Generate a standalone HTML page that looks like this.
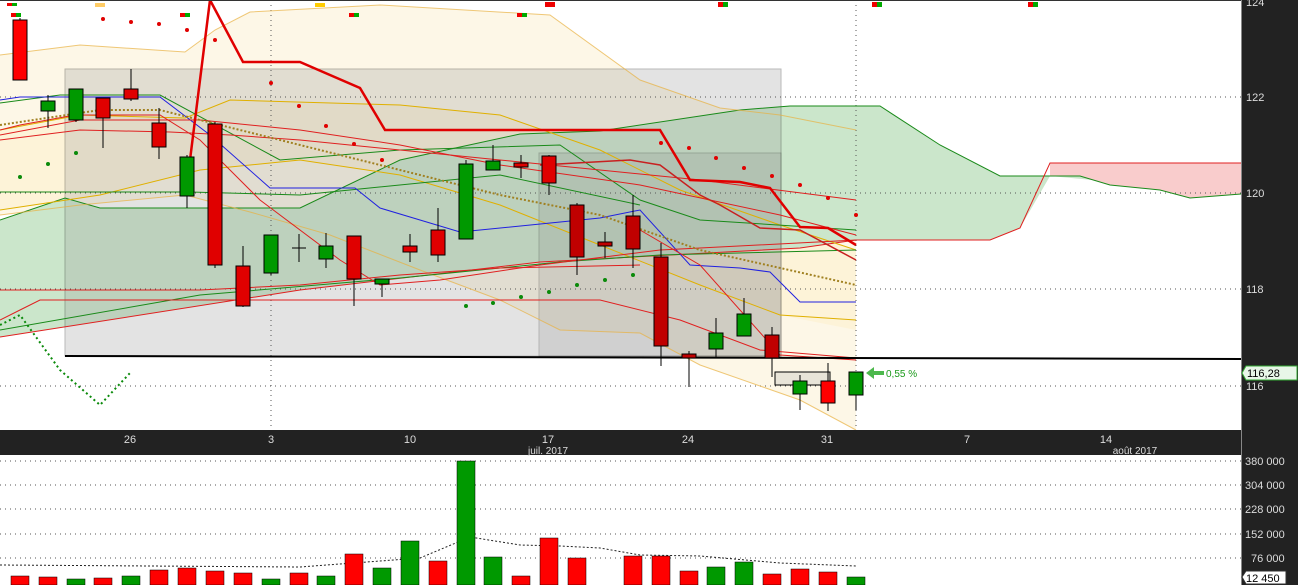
<!DOCTYPE html>
<html><head><meta charset="utf-8"><style>
html,body{margin:0;padding:0;background:#fff;}
svg{display:block;font-family:"Liberation Sans",sans-serif;}
</style></head><body>
<svg width="1298" height="585" viewBox="0 0 1298 585" xmlns="http://www.w3.org/2000/svg">
<rect width="1298" height="585" fill="#fff"/>
<!-- bollinger fill -->
<polygon points="0,55 80,45 185,52 215,30 250,12 380,5 550,15 640,80 720,108 780,115 856,130 856,430 800,400 700,365 640,333 560,330 500,300 420,270 330,235 250,212 185,195 80,205 0,215" fill="#fdf6e3" opacity="0.85"/>
<polygon points="0,130 80,115 185,118 230,100 400,105 500,115 600,150 680,190 780,225 856,250 856,330 780,315 700,285 600,245 500,205 400,175 300,160 200,170 100,195 0,210" fill="#fdf0cf" opacity="0.6"/>
<!-- green cloud -->
<polygon points="0,220 65,198 100,208 300,208 400,160 460,147 520,134 600,131 740,110 790,106 880,106 940,145 1000,176 1050,176 1050,176 1080,176 1110,185 1160,190 1190,198 1241,194 1241,194 1050,176 1020,228 990,240 860,240 800,248 540,262 300,290 0,337" fill="#cbe6cb"/>
<polygon points="1050,163 1241,163 1241,194 1190,198 1160,190 1110,185 1080,176 1050,176" fill="#f9cccc"/>
<!-- gray boxes -->
<rect x="65" y="69" width="716" height="287" fill="#9a9a9a" opacity="0.27" stroke="#000" stroke-width="1"/>
<rect x="539" y="153" width="242" height="203" fill="#8a8a8a" opacity="0.2" stroke="#000" stroke-width="1"/>
<!-- grid -->
<g stroke="#555" stroke-dasharray="1,4" stroke-width="1">
<line x1="0" y1="97" x2="1241" y2="97"/><line x1="0" y1="193" x2="1241" y2="193"/>
<line x1="0" y1="289" x2="1241" y2="289"/><line x1="0" y1="386" x2="1241" y2="386"/>
<line x1="271" y1="0" x2="271" y2="430"/><line x1="856" y1="0" x2="856" y2="430"/>
<line x1="0" y1="461" x2="1241" y2="461"/><line x1="0" y1="485" x2="1241" y2="485"/>
<line x1="0" y1="509" x2="1241" y2="509"/><line x1="0" y1="534" x2="1241" y2="534"/><line x1="0" y1="558" x2="1241" y2="558"/>
</g>
<!-- cloud lines -->
<polyline fill="none" stroke="#1a8a1a" points="0,220 65,198 100,208 300,208 400,160 460,147 520,134 600,131 740,110 790,106 880,106 940,145 1000,176 1080,176 1110,185 1160,190 1190,198 1241,194"/>
<polyline fill="none" stroke="#e02020" points="0,337 300,290 540,262 800,248 856,240 990,240 1020,228 1050,163 1241,163"/>
<polyline fill="none" stroke="#e8b040" opacity="0.7" points="0,55 80,45 185,52 215,30 250,12 380,5 550,15 640,80 720,108 780,115 856,130"/>
<polyline fill="none" stroke="#e8b040" opacity="0.7" points="0,215 80,205 185,195 250,212 330,235 420,270 500,300 560,330 640,333 700,365 800,400 856,430"/>
<polyline fill="none" stroke="#e0b000" points="0,130 80,115 185,118 230,100 400,105 500,115 600,150 680,190 780,225 856,250"/>
<polyline fill="none" stroke="#e0b000" points="0,210 100,195 200,170 300,160 400,175 500,205 600,245 700,285 780,315 856,320"/>
<polyline fill="none" stroke="#1a8a1a" points="0,103 60,95 160,95 280,160 400,150 560,145 640,200 700,220 856,230"/>
<polyline fill="none" stroke="#1a8a1a" points="0,192 190,192 300,195 500,175 640,205"/>
<polyline fill="none" stroke="#1a8a1a" points="0,330 200,295 400,278 560,262 660,255 856,250"/>
<polyline fill="none" stroke="#2020e0" points="0,100 20,97 160,97 210,135 270,188 355,188 380,208 460,232 600,218 640,210 690,265 740,268 770,272 800,302 856,302"/>
<polyline fill="none" stroke="#e02020" points="0,130 20,125 75,115 160,115 200,140 260,200 340,260 380,285 440,280 540,265 620,255 660,250 700,248 856,240"/>
<polyline fill="none" stroke="#e02020" points="0,290 40,290 200,290 300,285 400,275 500,268 640,265"/>
<polyline fill="none" stroke="#e02020" points="0,140 80,130 170,132 230,135 300,140 400,150 500,160 600,170 700,180 856,200"/>
<polyline fill="none" stroke="#e02020" points="0,135 80,120 200,120 300,130 400,145 500,165 640,185 780,215 856,235"/>
<polyline fill="none" stroke="#c82020" stroke-width="1.5" points="540,165 630,160 660,165 700,195 720,205 760,228 800,230 856,260"/>
<polyline fill="none" stroke="#a08020" stroke-width="2" stroke-dasharray="2,2" points="0,125 100,110 160,110 200,120 300,145 400,170 500,195 600,215 700,250 856,285"/>
<polyline fill="none" stroke="#e02020" stroke-width="1" points="0,320 20,310 40,300 600,300 680,320 760,350 856,358"/>
<polyline fill="none" stroke="#e02020" stroke-width="1" points="640,230 700,265 780,355 856,360"/>
<polyline fill="none" stroke="#e00000" stroke-width="2.5" points="190,160 210,0 243,62 300,62 330,75 360,88 385,130 660,130 690,180 740,182 770,188 800,227 828,228 856,245"/>
<!-- SAR dots -->
<g fill="#e00000"><circle cx="103" cy="19" r="2"/><circle cx="131" cy="22" r="2"/><circle cx="159" cy="24" r="2"/><circle cx="187" cy="30" r="2"/><circle cx="215" cy="40" r="2"/><circle cx="271" cy="83" r="2"/><circle cx="299" cy="106" r="2"/><circle cx="326" cy="126" r="2"/><circle cx="354" cy="144" r="2"/><circle cx="382" cy="160" r="2"/><circle cx="661" cy="143" r="2"/><circle cx="689" cy="148" r="2"/><circle cx="716" cy="158" r="2"/><circle cx="744" cy="168" r="2"/><circle cx="772" cy="176" r="2"/><circle cx="800" cy="185" r="2"/><circle cx="828" cy="198" r="2"/><circle cx="856" cy="215" r="2"/></g>
<g fill="#0a8a0a"><circle cx="20" cy="177" r="2"/><circle cx="48" cy="164" r="2"/><circle cx="76" cy="153" r="2"/><circle cx="466" cy="306" r="2"/><circle cx="493" cy="303" r="2"/><circle cx="521" cy="297" r="2"/><circle cx="549" cy="292" r="2"/><circle cx="577" cy="285" r="2"/><circle cx="605" cy="280" r="2"/><circle cx="633" cy="275" r="2"/></g>
<polyline fill="none" stroke="#0a8a0a" stroke-width="2" stroke-dasharray="2,3" points="0,325 20,315 60,370 100,405 130,373"/>
<!-- black trend line -->
<line x1="65" y1="356" x2="1241" y2="359" stroke="#000" stroke-width="2"/>
<rect x="775" y="372" width="55" height="13" fill="#e8e4d8" stroke="#000"/>
<!-- candles -->
<g stroke="#000" stroke-width="1">
<line x1="20" y1="18" x2="20" y2="80"/><rect x="13" y="20" width="14" height="60" fill="#f00"/>
<line x1="48" y1="95" x2="48" y2="128"/><rect x="41" y="101" width="14" height="10" fill="#090"/>
<line x1="76" y1="89" x2="76" y2="122"/><rect x="69" y="89" width="14" height="31" fill="#090"/>
<line x1="103" y1="98" x2="103" y2="148"/><rect x="96" y="98" width="14" height="20" fill="#e00000"/>
<line x1="131" y1="69" x2="131" y2="101"/><rect x="124" y="89" width="14" height="10" fill="#e00000"/>
<line x1="159" y1="108" x2="159" y2="159"/><rect x="152" y="123" width="14" height="24" fill="#e00000"/>
<line x1="187" y1="155" x2="187" y2="208"/><rect x="180" y="157" width="14" height="39" fill="#090"/>
<line x1="215" y1="122" x2="215" y2="268"/><rect x="208" y="124" width="14" height="141" fill="#e00000"/>
<line x1="243" y1="246" x2="243" y2="307"/><rect x="236" y="266" width="14" height="40" fill="#e00000"/>
<line x1="271" y1="235" x2="271" y2="275"/><rect x="264" y="235" width="14" height="38" fill="#090"/>
<line x1="299" y1="234" x2="299" y2="262"/><line x1="292" y1="248" x2="306" y2="248"/>
<line x1="326" y1="233" x2="326" y2="268"/><rect x="319" y="246" width="14" height="13" fill="#090"/>
<line x1="354" y1="236" x2="354" y2="306"/><rect x="347" y="236" width="14" height="43" fill="#e00000"/>
<line x1="382" y1="279" x2="382" y2="297"/><rect x="375" y="279" width="14" height="5" fill="#090"/>
<line x1="410" y1="234" x2="410" y2="262"/><rect x="403" y="246" width="14" height="6" fill="#e00000"/>
<line x1="438" y1="208" x2="438" y2="262"/><rect x="431" y="230" width="14" height="25" fill="#e00000"/>
<line x1="466" y1="160" x2="466" y2="239"/><rect x="459" y="164" width="14" height="75" fill="#090"/>
<line x1="493" y1="145" x2="493" y2="170"/><rect x="486" y="161" width="14" height="9" fill="#090"/>
<line x1="521" y1="155" x2="521" y2="178"/><rect x="514" y="163" width="14" height="4" fill="#e00000"/>
<line x1="549" y1="155" x2="549" y2="195"/><rect x="542" y="156" width="14" height="27" fill="#e00000"/>
<line x1="577" y1="203" x2="577" y2="275"/><rect x="570" y="205" width="14" height="52" fill="#c00000"/>
<line x1="605" y1="232" x2="605" y2="258"/><rect x="598" y="242" width="14" height="4" fill="#c00000"/>
<line x1="633" y1="195" x2="633" y2="268"/><rect x="626" y="216" width="14" height="33" fill="#c00000"/>
<line x1="661" y1="243" x2="661" y2="366"/><rect x="654" y="257" width="14" height="89" fill="#c00000"/>
<line x1="689" y1="351" x2="689" y2="387"/><rect x="682" y="354" width="14" height="4" fill="#c00000"/>
<line x1="716" y1="318" x2="716" y2="357"/><rect x="709" y="333" width="14" height="16" fill="#090"/>
<line x1="744" y1="298" x2="744" y2="336"/><rect x="737" y="314" width="14" height="22" fill="#090"/>
<line x1="772" y1="327" x2="772" y2="377"/><rect x="765" y="335" width="14" height="23" fill="#c00000"/>
<line x1="800" y1="375" x2="800" y2="410"/><rect x="793" y="381" width="14" height="13" fill="#090"/>
<line x1="828" y1="363" x2="828" y2="411"/><rect x="821" y="381" width="14" height="22" fill="#f00"/>
<line x1="856" y1="372" x2="856" y2="410"/><rect x="849" y="372" width="14" height="23" fill="#090"/>
</g>
<polygon points="866,373 874,367 874,371 884,371 884,375 874,375 874,379" fill="#4cb84c"/>
<text x="886" y="377" font-size="10" fill="#1a9a1a">0,55 %</text>
<!-- top markers -->
<g><rect x="7" y="3" width="5" height="3" fill="#e00"/><rect x="12" y="3" width="5" height="3" fill="#0a0"/>
<rect x="11" y="13" width="5" height="4" fill="#e00"/><rect x="16" y="13" width="5" height="4" fill="#0a0"/>
<rect x="95" y="3" width="10" height="4" fill="#fc6"/><rect x="180" y="13" width="5" height="4" fill="#e00"/><rect x="185" y="13" width="5" height="4" fill="#0a0"/>
<rect x="315" y="3" width="10" height="4" fill="#fc0"/><rect x="349" y="13" width="5" height="4" fill="#e00"/><rect x="354" y="13" width="5" height="4" fill="#0a0"/>
<rect x="517" y="13" width="5" height="4" fill="#e00"/><rect x="522" y="13" width="5" height="4" fill="#0a0"/>
<rect x="545" y="2" width="10" height="5" fill="#e00"/><rect x="718" y="2" width="5" height="5" fill="#e00"/><rect x="723" y="2" width="5" height="5" fill="#0a0"/>
<rect x="872" y="2" width="5" height="5" fill="#e00"/><rect x="877" y="2" width="5" height="5" fill="#0a0"/>
<rect x="1028" y="2" width="5" height="5" fill="#e00"/><rect x="1033" y="2" width="5" height="5" fill="#0a0"/></g>
<rect x="0" y="0" width="1241" height="1" fill="#333"/>
<!-- date bar -->
<rect x="0" y="430" width="1298" height="25" fill="#222"/>
<g fill="#ddd" font-size="11" text-anchor="middle">
<text x="130" y="443">26</text><text x="271" y="443">3</text><text x="410" y="443">10</text><text x="548" y="443">17</text><text x="688" y="443">24</text><text x="827" y="443">31</text><text x="967" y="443">7</text><text x="1106" y="443">14</text>
<text x="548" y="454" font-size="10">juil. 2017</text><text x="1135" y="454" font-size="10">août 2017</text></g>
<!-- right axis -->
<rect x="1241" y="0" width="57" height="585" fill="#222"/>
<line x1="1241.5" y1="0" x2="1241.5" y2="585" stroke="#888"/>
<g fill="#ddd" font-size="11"><text x="1246" y="6">124</text><text x="1246" y="101">122</text><text x="1246" y="197">120</text><text x="1246" y="293">118</text><text x="1246" y="390">116</text>
<text x="1245" y="465">380 000</text><text x="1245" y="489">304 000</text><text x="1245" y="513">228 000</text><text x="1245" y="538">152 000</text><text x="1251" y="562">76 000</text></g>
<polygon points="1242,373 1246,366 1297,366 1297,380 1246,380" fill="#e8f6e8" stroke="#3a3"/>
<text x="1247" y="377" font-size="11" fill="#000">116,28</text>
<polygon points="1242,577 1246,571 1286,571 1286,584 1246,584" fill="#fff" stroke="#333"/>
<text x="1246" y="582" font-size="11" fill="#000">12 450</text>
<!-- volume -->
<polyline fill="none" stroke="#222" stroke-dasharray="2,2" points="0,565 300,567 420,558 470,537 520,545 560,546 600,548 640,555 700,556 780,563 856,566"/>
<g stroke="#000" stroke-width="0.5">
<rect x="11" y="576" width="18" height="9" fill="#f00"/><rect x="39" y="577" width="18" height="8" fill="#f00"/><rect x="67" y="579" width="18" height="6" fill="#090"/><rect x="94" y="578" width="18" height="7" fill="#f00"/><rect x="122" y="576" width="18" height="9" fill="#090"/><rect x="150" y="570" width="18" height="15" fill="#f00"/><rect x="178" y="568" width="18" height="17" fill="#f00"/><rect x="206" y="571" width="18" height="14" fill="#f00"/><rect x="234" y="573" width="18" height="12" fill="#f00"/><rect x="262" y="579" width="18" height="6" fill="#090"/><rect x="290" y="573" width="18" height="12" fill="#f00"/><rect x="317" y="576" width="18" height="9" fill="#090"/><rect x="345" y="554" width="18" height="31" fill="#f00"/><rect x="373" y="568" width="18" height="17" fill="#090"/><rect x="401" y="541" width="18" height="44" fill="#090"/><rect x="429" y="561" width="18" height="24" fill="#f00"/><rect x="457" y="461" width="18" height="124" fill="#090"/><rect x="484" y="557" width="18" height="28" fill="#090"/><rect x="512" y="576" width="18" height="9" fill="#f00"/><rect x="540" y="538" width="18" height="47" fill="#f00"/><rect x="568" y="558" width="18" height="27" fill="#f00"/><rect x="624" y="556" width="18" height="29" fill="#f00"/><rect x="652" y="556" width="18" height="29" fill="#f00"/><rect x="680" y="571" width="18" height="14" fill="#f00"/><rect x="707" y="567" width="18" height="18" fill="#090"/><rect x="735" y="562" width="18" height="23" fill="#090"/><rect x="763" y="574" width="18" height="11" fill="#f00"/><rect x="791" y="569" width="18" height="16" fill="#f00"/><rect x="819" y="572" width="18" height="13" fill="#f00"/><rect x="847" y="577" width="18" height="8" fill="#090"/>
</g>
</svg>
</body></html>
